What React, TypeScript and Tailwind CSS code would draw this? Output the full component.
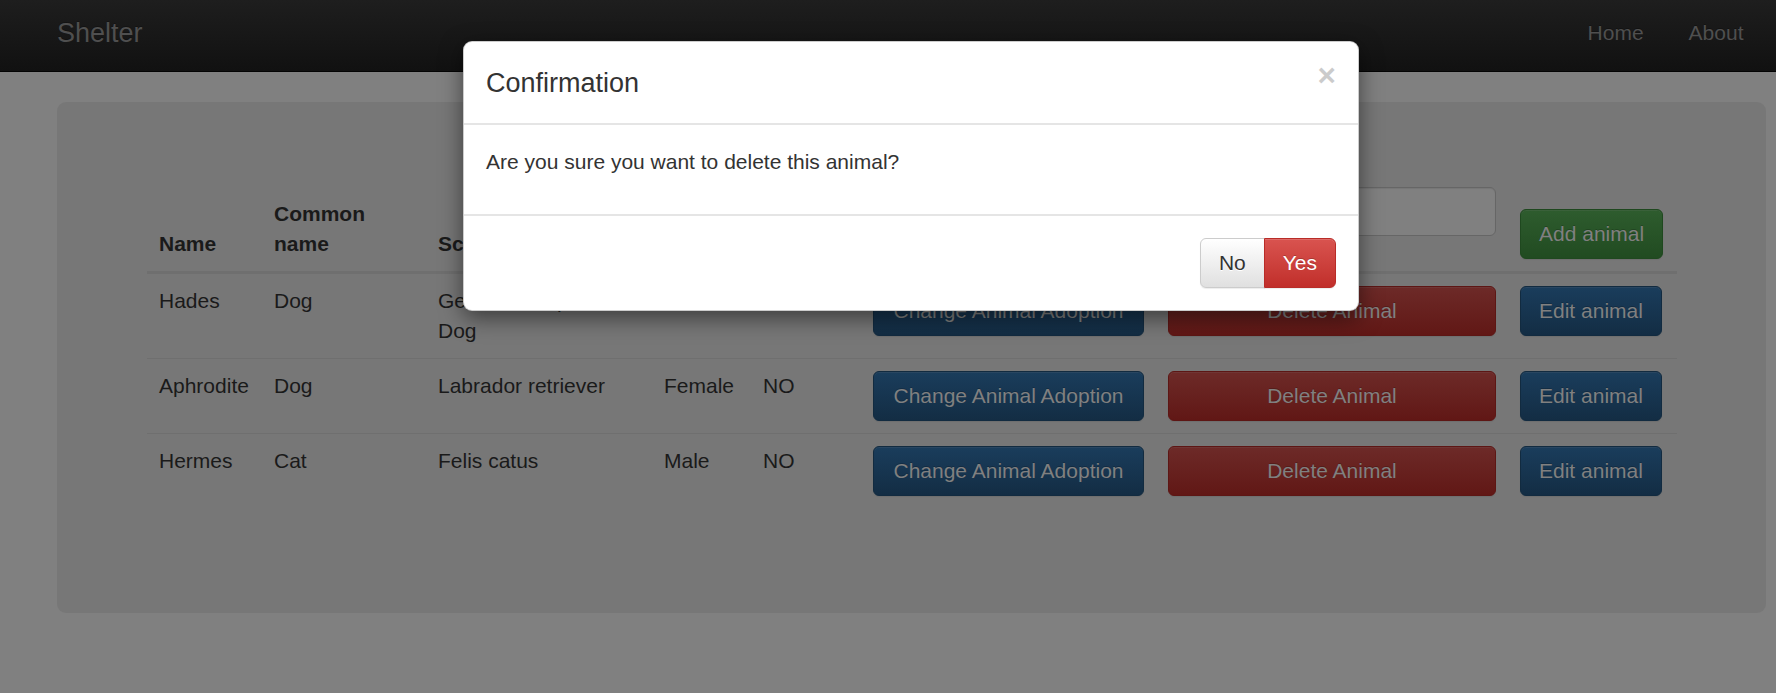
import React from "react";

type Row = { name: string; common: string; sci: string; gender: string; adopted: string };

const rows: Row[] = [
  { name: "Hades", common: "Dog", sci: "German Shepherd Dog", gender: "Male", adopted: "NO" },
  { name: "Aphrodite", common: "Dog", sci: "Labrador retriever", gender: "Female", adopted: "NO" },
  { name: "Hermes", common: "Cat", sci: "Felis catus", gender: "Male", adopted: "NO" },
];

/* Page colours are shown as seen through the modal's 50% black backdrop. */
const btnBase =
  "flex h-[50px] items-center justify-center rounded-[6px] border px-[18px] text-[21px] leading-[30px] text-[#808080] [text-shadow:0_-1px_0_rgba(0,0,0,0.2)] shadow-[inset_0_1px_0_rgba(128,128,128,0.15),0_1px_1px_rgba(0,0,0,0.075)]";
const btnPrimary = "bg-linear-to-b from-[#1a3d5c] to-[#132d44] border-[#122b40]";
const btnDanger = "bg-linear-to-b from-[#6d2a28] to-[#611715] border-[#5d1614]";
const btnSuccess = "bg-linear-to-b from-[#2e5c2e] to-[#214b21] border-[#1f481f]";

const th = "border-b-[3px] border-[#6f6f6f] p-[12px] text-left align-bottom";
const td = "border-t border-[#6f6f6f] p-[12px] align-top";

export default function App() {
  return (
    <div className="relative min-h-[693px] bg-[#808080] font-['Liberation_Sans',Arial,sans-serif] text-[21px] leading-[30px] text-[#1a1a1a]">
      <nav className="flex h-[72px] items-start justify-between border-b border-[#040404] bg-linear-to-b from-[#1e1e1e] to-[#111] pl-[57px] pr-[10px]">
        <span className="pt-[18px] text-[27px] leading-[30px] text-[#4f4f4f] [text-shadow:0_-1px_0_rgba(0,0,0,0.25)]">
          Shelter
        </span>
        <ul className="flex text-[#4f4f4f] [text-shadow:0_-1px_0_rgba(0,0,0,0.25)]">
          <li className="px-[22.5px] pt-[18px]">Home</li>
          <li className="px-[22.5px] pt-[18px]">About</li>
        </ul>
      </nav>

      <main className="ml-[57px] mr-[10px] mt-[30px] rounded-[9px] bg-[#777] px-[90px] pb-[75px] pt-[73px]">
        <table className="mb-[30px] w-full table-fixed border-collapse">
          <colgroup>
            <col className="w-[115px]" />
            <col className="w-[164px]" />
            <col className="w-[226px]" />
            <col className="w-[99px]" />
            <col className="w-[110px]" />
            <col className="w-[295px]" />
            <col className="w-[352px]" />
            <col className="w-[169px]" />
          </colgroup>
          <thead>
            <tr>
              <th className={`${th} font-bold`}>Name</th>
              <th className={`${th} font-bold`}>Common name</th>
              <th className={`${th} font-bold`}>Scientific name</th>
              <th className={`${th} font-bold`}>Gender</th>
              <th className={`${th} font-bold`}>Adopted</th>
              <th className={`${th} font-bold`}></th>
              <th className={`${th} font-normal`}>
                <input
                  type="text"
                  className="mb-[23px] block h-[49px] w-full rounded-[6px] border border-[#666] bg-[#808080] px-[18px] shadow-[inset_0_1px_1px_rgba(0,0,0,0.075)]"
                />
              </th>
              <th className={`${th} font-normal`}>
                <button className={`${btnBase} ${btnSuccess} w-fit`}>Add animal</button>
              </th>
            </tr>
          </thead>
          <tbody>
            {rows.map((r) => (
              <tr key={r.name}>
                <td className={td}>{r.name}</td>
                <td className={td}>{r.common}</td>
                <td className={td}>{r.sci}</td>
                <td className={td}>{r.gender}</td>
                <td className={td}>{r.adopted}</td>
                <td className={td}>
                  <button className={`${btnBase} ${btnPrimary} w-full whitespace-nowrap`}>Change Animal Adoption</button>
                </td>
                <td className={td}>
                  <button className={`${btnBase} ${btnDanger} w-full`}>Delete Animal</button>
                </td>
                <td className={td}>
                  <button className={`${btnBase} ${btnPrimary} w-fit`}>Edit animal</button>
                </td>
              </tr>
            ))}
          </tbody>
        </table>
      </main>

      {/* modal dialog (over the dimmed page) */}
      <div className="absolute left-[463px] top-[41px] w-[896px] rounded-[9px] border border-black/20 bg-white text-[#333] shadow-[0_7px_22px_rgba(0,0,0,0.5)]">
        <div className="flex items-start justify-between border-b-2 border-[#e5e5e5] px-[22px] pb-[20px] pt-[22px]">
          <h4 className="text-[27px] font-medium leading-[38.6px] text-[#333]">Confirmation</h4>
          <button className="-mt-[4px] text-[31.5px] font-bold leading-none text-black opacity-20 [text-shadow:0_1px_0_#fff]">
            ×
          </button>
        </div>
        <div className="p-[22px]">
          <p className="mb-[15px]">Are you sure you want to delete this animal?</p>
        </div>
        <div className="flex justify-end border-t-2 border-[#e5e5e5] p-[22px]">
          <div className="flex">
            <button className="flex h-[50px] items-center justify-center rounded-l-[6px] border border-[#ccc] bg-linear-to-b from-white to-[#e0e0e0] px-[18px] text-[21px] text-[#333] [text-shadow:0_1px_0_#fff] shadow-[inset_0_1px_0_rgba(255,255,255,0.15),0_1px_1px_rgba(0,0,0,0.075)]">
              No
            </button>
            <button className="-ml-px flex h-[50px] items-center justify-center rounded-r-[6px] border border-[#b92c28] bg-linear-to-b from-[#d9534f] to-[#c12e2a] px-[18px] text-[21px] text-white [text-shadow:0_-1px_0_rgba(0,0,0,0.2)] shadow-[inset_0_1px_0_rgba(255,255,255,0.15),0_1px_1px_rgba(0,0,0,0.075)]">
              Yes
            </button>
          </div>
        </div>
      </div>
    </div>
  );
}
